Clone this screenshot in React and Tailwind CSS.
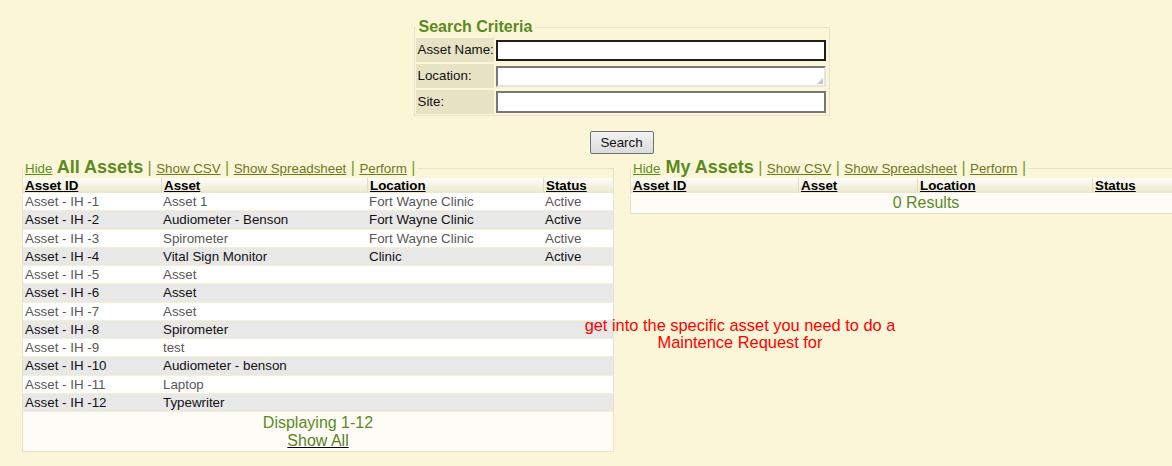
import React from "react";

const FONT = { fontFamily: '"Liberation Sans", Arial, sans-serif' };

const rows = [
  ["Asset - IH -1", "Asset 1", "Fort Wayne Clinic", "Active"],
  ["Asset - IH -2", "Audiometer - Benson", "Fort Wayne Clinic", "Active"],
  ["Asset - IH -3", "Spirometer", "Fort Wayne Clinic", "Active"],
  ["Asset - IH -4", "Vital Sign Monitor", "Clinic", "Active"],
  ["Asset - IH -5", "Asset", "", ""],
  ["Asset - IH -6", "Asset", "", ""],
  ["Asset - IH -7", "Asset", "", ""],
  ["Asset - IH -8", "Spirometer", "", ""],
  ["Asset - IH -9", "test", "", ""],
  ["Asset - IH -10", "Audiometer - benson", "", ""],
  ["Asset - IH -11", "Laptop", "", ""],
  ["Asset - IH -12", "Typewriter", "", ""],
];

function Sep({ last }) {
  return <span className="text-[16px] text-[#7a9a2a]">{last ? " |" : " | "}</span>;
}

function Legend({ title }) {
  return (
    <legend className="px-[2px] leading-[19px] whitespace-nowrap">
      <a href="#" className="text-[13.33px] text-[#5b8e1f] underline">Hide</a>
      <span className="text-[18px] font-bold text-[#5b8a22]"> {title}</span>
      <Sep />
      <a href="#" className="text-[13.33px] text-[#6b7a1e] underline">Show CSV</a>
      <Sep />
      <a href="#" className="text-[13.33px] text-[#6b7a1e] underline">Show Spreadsheet</a>
      <Sep />
      <a href="#" className="text-[13.33px] text-[#6b7a1e] underline">Perform</a>
      <Sep last />
    </legend>
  );
}

function Header({ cols }) {
  const labels = ["Asset ID", "Asset", "Location", "Status"];
  return (
    <div className={`grid ${cols} h-[15px] bg-gradient-to-b from-[#fffef9] to-[#ebe6cc]`}>
      {labels.map((l, i) => (
        <div
          key={l}
          className={`pl-[2px] text-[13.33px] leading-[15px] font-bold text-black underline ${i > 0 ? "border-l border-[#e2ddc4]" : ""}`}
        >
          {l}
        </div>
      ))}
    </div>
  );
}

export default function App() {
  return (
    <div className="w-[1172px] h-[466px] overflow-hidden bg-[#fcf6d8]" style={FONT}>
      <div className="relative w-[1243px]">
        <div className="flex flex-col items-center">
          <fieldset className="mt-[18px] w-[416px] border border-[#e6e3cf] pl-[1px] pr-[1px] pb-[1px]">
            <legend className="ml-[0px] px-[3px] text-[16px] leading-[18px] font-bold text-[#5b8a22]">
              Search Criteria
            </legend>
            <div className="flex flex-col gap-[2px] pt-[2px]">
              <div className="flex h-[24px]">
                <div className="w-[78px] whitespace-nowrap bg-[#e8e3c5] pl-[2px] text-[13.33px] leading-[24px] text-[#111]">Asset Name:</div>
                <div className="flex flex-1 items-center px-[2px]">
                  <input className="h-[21px] w-[330px] border-2 border-[#1e1e1e] bg-white outline-none" />
                </div>
              </div>
              <div className="flex h-[24px]">
                <div className="w-[78px] whitespace-nowrap bg-[#e8e3c5] pl-[2px] text-[13.33px] leading-[24px] text-[#111]">Location:</div>
                <div className="flex flex-1 items-center px-[2px]">
                  <div className="relative h-[21px] w-[330px] border-2 border-t-[#7a7a7a] border-l-[#7a7a7a] border-r-[#e4e4e4] border-b-[#e4e4e4] bg-white">
                    <svg className="absolute right-[1px] bottom-[1px]" width="6" height="6" viewBox="0 0 6 6">
                      <path d="M6 0 L6 6 L0 6 Z" fill="#c8c8c8" />
                    </svg>
                  </div>
                </div>
              </div>
              <div className="flex h-[24px]">
                <div className="w-[78px] whitespace-nowrap bg-[#e8e3c5] pl-[2px] text-[13.33px] leading-[24px] text-[#111]">Site:</div>
                <div className="flex flex-1 items-center px-[2px]">
                  <input className="h-[22px] w-[330px] border-2 border-[#777] bg-white outline-none" />
                </div>
              </div>
            </div>
          </fieldset>
          <button className="mt-[15px] h-[23px] w-[64px] rounded-[2px] border border-[#707070] bg-gradient-to-b from-[#f2f2f2] to-[#dcdcdc] text-[13.33px] text-[#111]">
            Search
          </button>
        </div>

        <div className="mt-[4px] flex items-start pl-[22px] gap-[16px]">
          <fieldset className="w-[592px] border border-[#e6e2cb]">
            <Legend title="All Assets" />
            <Header cols="grid-cols-[138px_206px_176px_70px]" />
            {rows.map((r, i) => {
              const odd = i % 2 === 0;
              return (
                <div
                  key={i}
                  className={`grid grid-cols-[138px_206px_176px_70px] h-[18.25px] border-b border-[#f4f0cf] text-[13.33px] leading-[17px] ${odd ? "bg-white text-[#585858]" : "bg-[#e8e8e8] text-[#111]"}`}
                >
                  <div className="pl-[2px] whitespace-nowrap">{r[0]}</div>
                  <div className="pl-[2px] whitespace-nowrap">{r[1]}</div>
                  <div className="pl-[2px] whitespace-nowrap">{r[2]}</div>
                  <div className="pl-[2px] whitespace-nowrap">{r[3]}</div>
                </div>
              );
            })}
            <div className="flex h-[39px] flex-col items-center bg-[#fdfcf7] pt-[2px] text-[16px] leading-[18px] text-[#5c8a24]">
              <div>Displaying 1-12</div>
              <a href="#" className="text-[#5c7f24] underline decoration-black">Show All</a>
            </div>
          </fieldset>

          <fieldset className="w-[592px] border border-[#e3e0d0]">
            <Legend title="My Assets" />
            <Header cols="grid-cols-[167px_119px_175px_129px]" />
            <div className="h-[20px] bg-[#fdfcf7] text-center text-[16px] leading-[20px] text-[#5c8a24]">0 Results</div>
          </fieldset>
        </div>

        <div className="absolute left-[565px] top-[317px] w-[350px] text-center text-[16.4px] leading-[17px] text-[#ff0000]">
          get into the specific asset you need to do a
          <br />
          Maintence Request for
        </div>
      </div>
    </div>
  );
}
